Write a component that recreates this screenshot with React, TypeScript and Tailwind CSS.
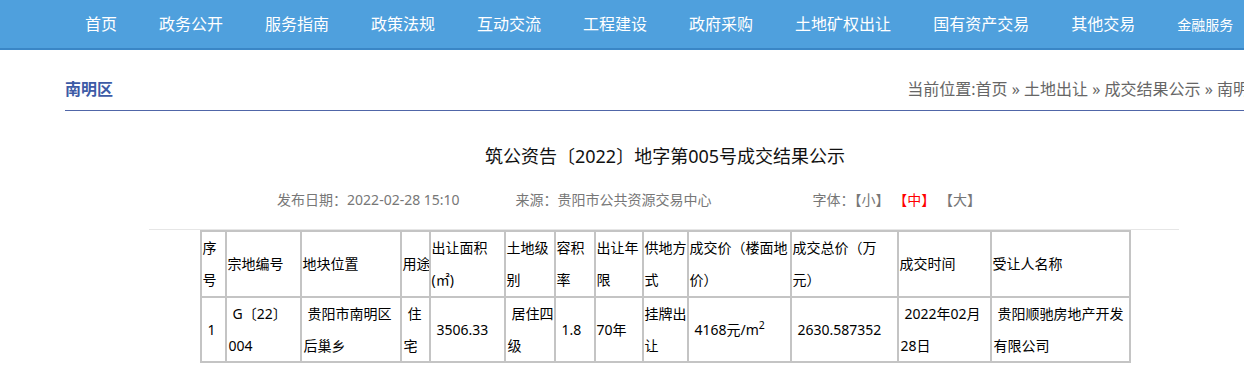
import React from "react";

const navItems = [
  "首页",
  "政务公开",
  "服务指南",
  "政策法规",
  "互动交流",
  "工程建设",
  "政府采购",
  "土地矿权出让",
  "国有资产交易",
  "其他交易",
];

// column widths, each includes its right border
const colWidths = [25, 75, 100, 29, 75, 50, 40, 48, 45, 103, 107, 93, 139];

const headers: React.ReactNode[] = [
  <>序<br />号</>,
  "宗地编号",
  "地块位置",
  "用途",
  <>出让面积<br />(㎡)</>,
  <>土地级<br />别</>,
  <>容积<br />率</>,
  <>出让年<br />限</>,
  <>供地方<br />式</>,
  <>成交价（楼面地<br />价）</>,
  <>成交总价（万<br />元）</>,
  "成交时间",
  "受让人名称",
];

// [content, has leading space]
const row: [React.ReactNode, boolean][] = [
  ["1", true],
  [<>G〔22〕<br />004</>, true],
  [<>贵阳市南明区<br />后巢乡</>, true],
  [<>住<br />宅</>, true],
  ["3506.33", true],
  [<>居住四<br />级</>, true],
  ["1.8", true],
  ["70年", false],
  [<>挂牌出<br />让</>, false],
  [<>4168元/m<sup>2</sup></>, true],
  ["2630.587352", true],
  [<>2022年02月<br />28日</>, true],
  [<>贵阳顺驰房地产开发<br />有限公司</>, true],
];

const font = { fontFamily: '"Noto Sans", "Noto Sans CJK SC", sans-serif' };

export default function App() {
  return (
    <div className="w-full overflow-hidden bg-white min-h-[381px]" style={font}>
      {/* top nav */}
      <div className="h-[50px] bg-[#4fa0dd] border-b-2 border-[#3a86c6] flex items-center pl-[85px] gap-[42px] text-white text-[16px] whitespace-nowrap">
        {navItems.map((n) => (
          <span key={n}>{n}</span>
        ))}
        <span className="text-[14px]">金融服务</span>
      </div>

      <div className="ml-[65px] w-[1200px]">
        <div className="h-[61px] pt-[18px] flex items-center justify-between border-b border-[#5066a8] whitespace-nowrap">
          <span className="text-[16px] font-bold text-[#3d5ba6]">南明区</span>
          <span className="text-[16px] text-[#666]">
            当前位置:首页 » 土地出让 » 成交结果公示 » 南明区
          </span>
        </div>

        <div className="mt-[33px] text-center text-[18px] leading-[24px] text-[#111]">
          筑公资告〔2022〕地字第005号成交结果公示
        </div>

        <div className="mt-[22px] flex justify-center pr-[72px] text-[14px] leading-[20px] text-[#777] whitespace-nowrap">
          <span>发布日期：2022-02-28 15:10</span>
          <span className="ml-[56px]">来源：贵阳市公共资源交易中心</span>
          <span className="ml-[101px]">
            字体：【小】 <span className="text-[#ff0000]">【中】</span> 【大】
          </span>
        </div>

        <div className="mt-[19px] ml-[84px] w-[1030px] border-t border-[#e6e6e6]" />

        <div className="mx-auto w-[931px] border-l-2 border-t-2 border-[#c4c4c4] text-[14px] leading-[32px] text-black">
          <div className="flex">
            {headers.map((h, i) => (
              <div
                key={i}
                className="border-r-2 border-b-2 border-[#c4c4c4] pl-[1px] whitespace-nowrap overflow-hidden flex items-center h-[66px]"
                style={{ width: colWidths[i] }}
              >
                <div>{h}</div>
              </div>
            ))}
          </div>
          <div className="flex">
            {row.map(([c, lead], i) => (
              <div
                key={i}
                className={
                  "border-r-2 border-b-2 border-[#c4c4c4] whitespace-nowrap overflow-hidden flex items-center h-[65px] " +
                  (lead ? "pl-[2px]" : "pl-[1px]")
                }
                style={{ width: colWidths[i] }}
              >
                <div className={lead ? "indent-[4px]" : ""}>{c}</div>
              </div>
            ))}
          </div>
        </div>
      </div>
    </div>
  );
}
